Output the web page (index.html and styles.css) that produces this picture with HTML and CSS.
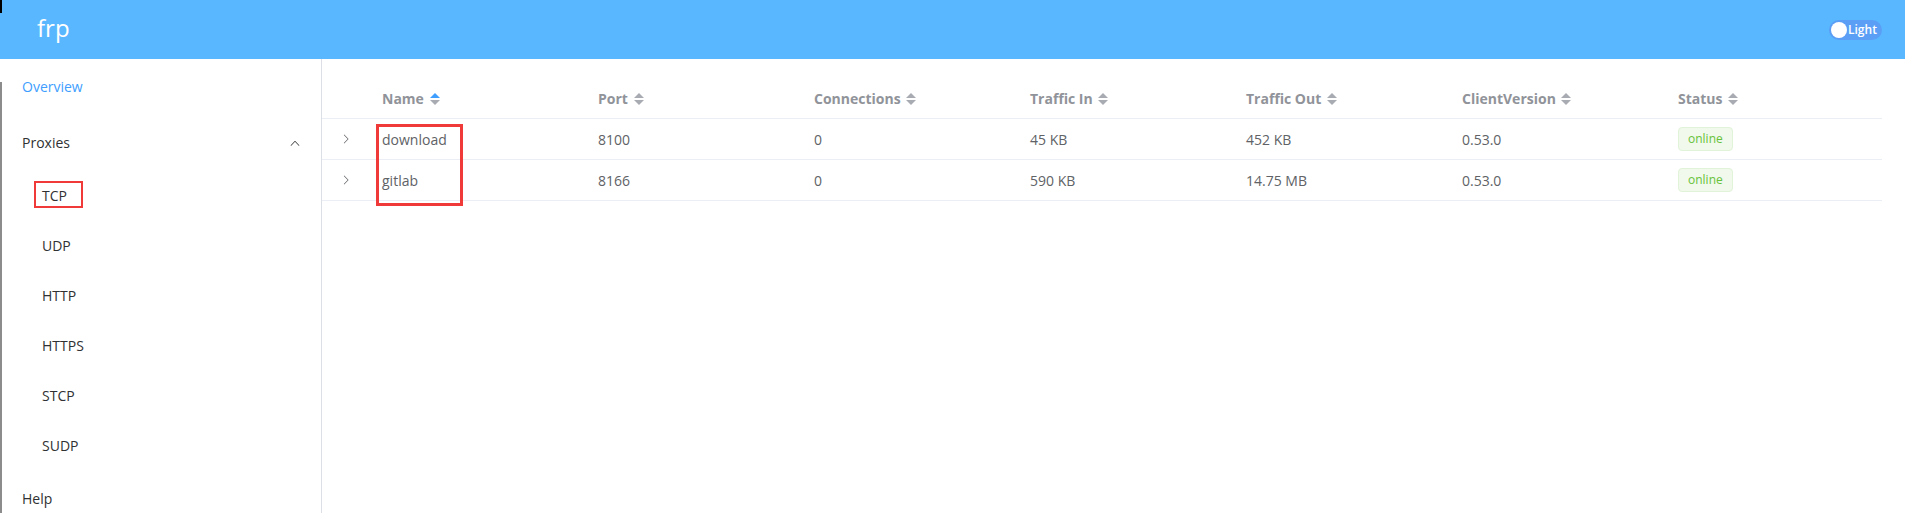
FILE: index.html
```html
<!DOCTYPE html>
<html lang="en">
<head>
    <meta charset="UTF-8">
    <meta name="viewport" content="width=device-width, initial-scale=1.0">
    <title>frp server</title>
    <link rel="stylesheet" href="styles.css">
</head>
<body>

    <div id="head">
        <div class="brand">frp</div>
        <div class="switch">
            <span class="switch-dot"></span>
            <span class="switch-text">Light</span>
        </div>
    </div>

    <div id="layout">
        <div id="menu">
            <div class="menu-item activo">Overview</div>
            <div class="menu-item submenu">
                Proxies
                <svg class="arrow" width="12" height="12" viewBox="0 0 1024 1024"><path fill="currentColor" d="M488.832 344.32l-339.84 356.672a32 32 0 0 0 0 44.16l.384.384a29.44 29.44 0 0 0 42.688 0l320-335.872 319.872 335.872a29.44 29.44 0 0 0 42.688 0l.384-.384a32 32 0 0 0 0-44.16L535.168 344.32a32 32 0 0 0-46.336 0z"/></svg>
            </div>
            <div class="menu-item sub">TCP</div>
            <div class="menu-item sub">UDP</div>
            <div class="menu-item sub">HTTP</div>
            <div class="menu-item sub">HTTPS</div>
            <div class="menu-item sub">STCP</div>
            <div class="menu-item sub">SUDP</div>
            <div class="menu-item">Help</div>
        </div>

        <div id="main">
            <table class="tabla">
                <colgroup>
                    <col style="width:48px">
                    <col style="width:216px">
                    <col style="width:216px">
                    <col style="width:216px">
                    <col style="width:216px">
                    <col style="width:216px">
                    <col style="width:216px">
                    <col style="width:216px">
                </colgroup>
                <thead>
                    <tr>
                        <th></th>
                        <th>Name <span class="caret up-on"><i class="up"></i><i class="down"></i></span></th>
                        <th>Port <span class="caret"><i class="up"></i><i class="down"></i></span></th>
                        <th>Connections <span class="caret"><i class="up"></i><i class="down"></i></span></th>
                        <th>Traffic In <span class="caret"><i class="up"></i><i class="down"></i></span></th>
                        <th>Traffic Out <span class="caret"><i class="up"></i><i class="down"></i></span></th>
                        <th>ClientVersion <span class="caret"><i class="up"></i><i class="down"></i></span></th>
                        <th>Status <span class="caret"><i class="up"></i><i class="down"></i></span></th>
                    </tr>
                </thead>
                <tbody>
                    <tr>
                        <td class="expand"><svg width="12" height="12" viewBox="0 0 1024 1024"><path fill="currentColor" d="M340.864 149.312a30.592 30.592 0 0 0 0 42.752L652.736 512 340.864 831.872a30.592 30.592 0 0 0 0 42.752 29.12 29.12 0 0 0 41.728 0L714.24 534.336a32 32 0 0 0 0-44.672L382.592 149.376a29.12 29.12 0 0 0-41.728 0z"/></svg></td>
                        <td>download</td>
                        <td>8100</td>
                        <td>0</td>
                        <td>45 KB</td>
                        <td>452 KB</td>
                        <td>0.53.0</td>
                        <td><span class="tag">online</span></td>
                    </tr>
                    <tr>
                        <td class="expand"><svg width="12" height="12" viewBox="0 0 1024 1024"><path fill="currentColor" d="M340.864 149.312a30.592 30.592 0 0 0 0 42.752L652.736 512 340.864 831.872a30.592 30.592 0 0 0 0 42.752 29.12 29.12 0 0 0 41.728 0L714.24 534.336a32 32 0 0 0 0-44.672L382.592 149.376a29.12 29.12 0 0 0-41.728 0z"/></svg></td>
                        <td>gitlab</td>
                        <td>8166</td>
                        <td>0</td>
                        <td>590 KB</td>
                        <td>14.75 MB</td>
                        <td>0.53.0</td>
                        <td><span class="tag">online</span></td>
                    </tr>
                </tbody>
            </table>
        </div>
    </div>

    <!-- marcas rojas de la captura -->
    <div class="marca marca-tcp"></div>
    <div class="marca marca-nombre"></div>

</body>
</html>
```

FILE: styles.css
```css
body {
    margin: 0;
    height: 513px;
    overflow: hidden;
    font-family: "Open Sans", "Noto Sans", Arial, sans-serif;
    font-size: 14px;
    color: #606266;
    background: #fff;
}
#head {
    height: 59px;
    display: flex;
    align-items: center;
    justify-content: space-between;
    padding: 0 23px 0 37px;
    background: linear-gradient(#000, #000) 0 0 / 2px 13px no-repeat, #58b7ff;
    color: #fff;
}
.brand {
    font-size: 24px;
    line-height: 1;
    margin-top: -4px;
}
.switch {
    display: flex;
    align-items: center;
    height: 20px;
    width: 53px;
    box-sizing: border-box;
    padding: 0 2px;
    border-radius: 10px;
    background-color: #5b9ef6;
}
.switch-dot {
    width: 16px;
    height: 16px;
    border-radius: 50%;
    background-color: #fff;
}
.switch-text {
    font-size: 12px;
    font-weight: 600;
    margin-left: 1px;
}
#layout {
    display: flex;
    height: 454px;
}
#menu {
    width: 321px;
    flex: none;
    border-right: 1px solid #dcdfe6;
    background: linear-gradient(#8c8c8c, #8c8c8c) 0 23px / 2px 100% no-repeat, #fff;
    color: #303133;
}
.menu-item {
    height: 56px;
    line-height: 56px;
    padding-left: 22px;
    position: relative;
}
.menu-item.activo { color: #409eff; }
.menu-item.sub {
    height: 50px;
    line-height: 50px;
    padding-left: 42px;
}
.submenu {
    display: flex;
    align-items: center;
    justify-content: space-between;
    padding-right: 20px;
}
.arrow { color: #303133; }
#main {
    flex: 1;
    padding: 19px 23px 0 0;
}
.tabla {
    width: 1560px;
    table-layout: fixed;
    border-collapse: collapse;
}
.tabla th, .tabla td {
    height: 40px;
    padding: 0 12px;
    text-align: left;
    border-bottom: 1px solid #ebeef5;
    white-space: nowrap;
}
.tabla th {
    color: #909399;
    font-weight: 700;
}
.tabla td.expand {
    color: #606266;
    padding-left: 18px;
}
.expand svg { display: block; }
.caret {
    display: inline-flex;
    flex-direction: column;
    vertical-align: middle;
    gap: 2px;
    margin-left: 2px;
    margin-top: -2px;
}
.caret i {
    width: 0;
    height: 0;
    border-left: 5px solid transparent;
    border-right: 5px solid transparent;
}
.caret .up { border-bottom: 5px solid #a8abb2; }
.caret .down { border-top: 5px solid #a8abb2; }
.caret.up-on .up { border-bottom-color: #409eff; }
.tag {
    display: inline-block;
    height: 24px;
    line-height: 22px;
    padding: 0 9px;
    box-sizing: border-box;
    font-size: 12px;
    color: #67c23a;
    background-color: #f0f9eb;
    border: 1px solid #e1f3d8;
    border-radius: 4px;
}
.marca {
    position: absolute;
    border: 2px solid #f03a3a;
}
.marca-tcp {
    left: 34px;
    top: 181px;
    width: 45px;
    height: 23px;
}
.marca-nombre {
    left: 376px;
    top: 124px;
    width: 81px;
    height: 76px;
    border-width: 3px;
}
```
